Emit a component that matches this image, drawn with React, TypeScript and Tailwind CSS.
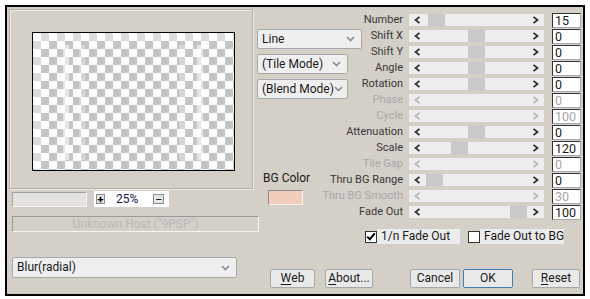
import type { ReactNode } from 'react'

type Row = { label: string; value: string; thumb: number | null }

const ROWS: Row[] = [
  { label: 'Number', value: '15', thumb: 19 },
  { label: 'Shift X', value: '0', thumb: 59 },
  { label: 'Shift Y', value: '0', thumb: 59 },
  { label: 'Angle', value: '0', thumb: 59 },
  { label: 'Rotation', value: '0', thumb: 59 },
  { label: 'Phase', value: '0', thumb: null },
  { label: 'Cycle', value: '100', thumb: null },
  { label: 'Attenuation', value: '0', thumb: 59 },
  { label: 'Scale', value: '120', thumb: 42 },
  { label: 'Tile Gap', value: '0', thumb: null },
  { label: 'Thru BG Range', value: '0', thumb: 17 },
  { label: 'Thru BG Smooth', value: '30', thumb: null },
  { label: 'Fade Out', value: '100', thumb: 101 },
]

function Chevron({ dir, muted }: { dir: 'left' | 'right'; muted?: boolean }) {
  return (
    <svg width="7" height="8" viewBox="0 0 7 8" className="shrink-0">
      <polyline
        points={dir === 'left' ? '5.5,0.8 1.5,4 5.5,7.2' : '1.5,0.8 5.5,4 1.5,7.2'}
        fill="none"
        stroke={muted ? '#b4b4b4' : '#2a2a2a'}
        strokeWidth="1.7"
      />
    </svg>
  )
}

function DownArrow() {
  return (
    <svg width="9" height="6" viewBox="0 0 9 6" className="shrink-0">
      <polyline points="1,1 4.5,4.5 8,1" fill="none" stroke="#8a8a8a" strokeWidth="1.6" />
    </svg>
  )
}

function Select({ label, className }: { label: string; className: string }) {
  return (
    <div
      className={`flex items-center justify-between whitespace-nowrap rounded-[2px] border border-[#a9a9a9] bg-[#efefef] pl-[4px] pr-[6px] text-[12px] text-[#1a1a1a] ${className}`}
    >
      <span>{label}</span>
      <DownArrow />
    </div>
  )
}

function Slider({ thumb }: { thumb: number | null }) {
  const muted = thumb === null
  return (
    <div className="relative flex h-[12px] w-[135px] items-center justify-between bg-[#ededed] px-[5px]">
      <Chevron dir="left" muted={muted} />
      {thumb !== null && (
        <div className="absolute top-0 h-[12px] w-[17px] bg-[#c9c9c9]" style={{ left: thumb }} />
      )}
      <Chevron dir="right" muted={muted} />
    </div>
  )
}

function Button({ children, className }: { children: ReactNode; className: string }) {
  return (
    <div
      className={`flex h-[19px] items-center justify-center rounded-[2px] border bg-[#e9e9e9] text-[12px] leading-[17px] text-[#1a1a1a] ${className}`}
    >
      {children}
    </div>
  )
}

function Check({ checked, label, labelWidth }: { checked: boolean; label: string; labelWidth: string }) {
  return (
    <div className="flex items-center">
      <div className="flex h-[12px] w-[12px] shrink-0 items-center justify-center border border-[#333] bg-white">
        {checked && (
          <svg width="10" height="9" viewBox="0 0 10 9">
            <polyline points="1.2,4.6 3.8,7.2 8.8,1.4" fill="none" stroke="#000" strokeWidth="2" />
          </svg>
        )}
      </div>
      <div
        className={`h-[15px] whitespace-nowrap bg-[#ececec] pl-[4px] text-[12px] leading-[15px] text-[#1a1a1a] ${labelWidth}`}
      >
        {label}
      </div>
    </div>
  )
}

export default function App() {
  return (
    <div className="h-[299px] w-[590px] bg-white pl-[5px] pt-[5px] font-['Roboto','Liberation_Sans',Arial,sans-serif] leading-none">
      <div className="flex h-[291px] w-[580px] border-2 border-black bg-[#d4d0c8]">
        {/* left: preview + zoom + host + filter */}
        <div className="flex w-[250px] shrink-0 flex-col">
          <div className="ml-[2px] mt-[2px] h-[180px] w-[244px] border border-[#b4b0a8] shadow-[inset_1px_1px_0_#ecebe7,1px_1px_0_#ecebe7]">
            <div className="relative ml-[22px] mt-[22px] h-[139px] w-[203px] overflow-hidden border border-black bg-[conic-gradient(#c4c4c4_25%,#ffffff_0_50%,#c4c4c4_0_75%,#ffffff_0)] bg-[length:16px_16px]">
              <div className="absolute inset-x-0 top-0 h-[8px] bg-white/40" />
              <div className="absolute inset-y-0 left-0 w-[8px] bg-white/40" />
              <div className="absolute bottom-[10px] left-[30px] top-[12px] w-[6px] bg-white/55" />
              <div className="absolute bottom-[10px] left-[46px] top-[12px] w-[6px] bg-white/30" />
              <div className="absolute bottom-[10px] left-[146px] top-[12px] w-[6px] bg-white/30" />
              <div className="absolute bottom-[10px] left-[164px] top-[12px] w-[6px] bg-white/55" />
            </div>
          </div>

          <div className="mt-[2px] flex items-center">
            <div className="ml-[5px] h-[15px] w-[75px] border border-t-[#a0a0a0] border-l-[#a0a0a0] border-r-[#f4f4f4] border-b-[#f4f4f4] bg-[#e4e3e0]" />
            <div className="ml-[7px] flex h-[16px] w-[75px] items-center bg-white pl-[2px]">
              <div className="flex h-[10px] w-[9px] items-center justify-center border border-[#8c8c8c] bg-[#e6e6e6] text-[11px] font-bold text-black">
                +
              </div>
              <span className="ml-[11px] text-[12px] text-[#141450]">25%</span>
              <div className="ml-[15px] flex h-[10px] w-[11px] items-center justify-center border border-[#8c8c8c] bg-[#e6e6e6] text-[11px] text-black">
                –
              </div>
            </div>
          </div>

          <div className="ml-[5px] mt-[9px] h-[16px] w-[247px] shrink-0 border border-t-[#9a9a9a] border-l-[#9a9a9a] border-r-[#f4f4f4] border-b-[#f4f4f4] text-center text-[12px] leading-[14px] text-[#b9b9b9]">
            Unknown Host ("9PSP")
          </div>

          <Select label="Blur(radial)" className="ml-[5px] mt-[25px] h-[21px] w-[225px] leading-[19px]" />
        </div>

        {/* right: modes, sliders, options, buttons */}
        <div className="flex flex-col">
          <div className="flex items-start">
            <div className="flex w-[105px] shrink-0 flex-col pt-[22px]">
              <Select label="Line" className="h-[20px] w-[105px] leading-[18px]" />
              <Select label="(Tile Mode)" className="mt-[5px] h-[20px] w-[91px] leading-[18px]" />
              <Select label="(Blend Mode)" className="mt-[5px] h-[20px] w-[91px] leading-[18px]" />
              <div className="ml-[6px] mt-[73px] w-[46px] whitespace-nowrap text-center text-[12px] text-[#1a1a1a]">
                BG Color
              </div>
              <div className="ml-[11px] mt-[6px] h-[15px] w-[35px] border border-t-[#8a8a8a] border-l-[#8a8a8a] border-r-[#f4f4f4] border-b-[#f4f4f4] bg-[#f2cdbd]" />
            </div>

            <div className="mt-[5px] flex flex-col">
              {ROWS.map((r) => (
                <div key={r.label} className="flex h-4 items-center">
                  <div
                    className={`flex h-4 w-[41px] justify-end whitespace-nowrap text-[11px] leading-4 ${
                      r.thumb === null ? 'text-[#a8a8a8]' : 'text-[#383838]'
                    }`}
                  >
                    {r.label}
                  </div>
                  <div className="ml-[6px]">
                    <Slider thumb={r.thumb} />
                  </div>
                  <div
                    className={`ml-[8px] h-[15px] w-[29px] border border-t-[#333] border-l-[#333] border-r-[#a8a8a8] border-b-[#a8a8a8] bg-white pl-[2px] text-[12.5px] leading-[13px] ${
                      r.thumb === null ? 'text-[#a6a6a6]' : 'text-[#1a1a1a]'
                    }`}
                  >
                    {r.value}
                  </div>
                </div>
              ))}
            </div>
          </div>

          <div className="ml-[108px] mt-[9px] flex items-center">
            <Check checked label="1/n Fade Out" labelWidth="w-[83px]" />
            <div className="ml-[8px]">
              <Check checked={false} label="Fade Out to BG" labelWidth="w-[84px]" />
            </div>
          </div>

          <div className="mt-[25px] flex items-center">
            <Button className="ml-[13px] w-[45px] border-[#a7a7a7]">
              <span className="underline underline-offset-2">W</span>eb
            </Button>
            <Button className="ml-[10px] w-[48px] border-[#a7a7a7]">
              <span className="underline underline-offset-2">A</span>bout...
            </Button>
            <Button className="ml-[37px] w-[50px] border-[#a7a7a7]">Cancel</Button>
            <Button className="ml-[3px] w-[50px] border-[#3b80b8]">OK</Button>
            <Button className="ml-[19px] w-[48px] border-[#a7a7a7]">
              <span className="underline underline-offset-2">R</span>eset
            </Button>
          </div>
        </div>
      </div>
    </div>
  )
}
